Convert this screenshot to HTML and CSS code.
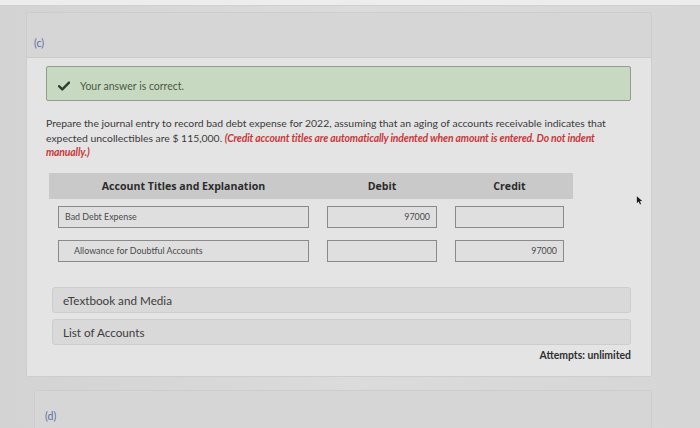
FILE: index.html
```html
<!DOCTYPE html>
<html lang="en">
<head>
<meta charset="utf-8">
<title>Journal entry</title>
<link rel="stylesheet" href="styles.css">
</head>
<body>
<div class="screen">
  <div class="topstrip"></div>
  <section class="card">
    <header class="card-head"><span class="part">(c)</span></header>
    <div class="card-body">
      <div class="notice">
        <svg class="check" viewBox="0 0 12 10" width="12" height="10"><path d="M1 5.2 L4.3 8.4 L11 1.6" fill="none" stroke="#2f3f2f" stroke-width="2.4" stroke-linecap="round" stroke-linejoin="round"/></svg>
        <span>Your answer is correct.</span>
      </div>
      <p class="prompt">Prepare the journal entry to record bad debt expense for 2022, assuming that an aging of accounts receivable indicates that expected uncollectibles are $ 115,000. <em class="note">(Credit account titles are automatically indented when amount is entered. Do not indent manually.)</em></p>
      <div class="journal">
        <div class="jhead">
          <div class="jh">Account Titles and Explanation</div>
          <div class="jh">Debit</div>
          <div class="jh">Credit</div>
        </div>
        <div class="jrow">
          <div class="cell"><div class="field acct">Bad Debt Expense</div></div>
          <div class="cell"><div class="field amt">97000</div></div>
          <div class="cell"><div class="field amt"></div></div>
        </div>
        <div class="jrow">
          <div class="cell"><div class="field acct credit">Allowance for Doubtful Accounts</div></div>
          <div class="cell"><div class="field amt"></div></div>
          <div class="cell"><div class="field amt">97000</div></div>
        </div>
      </div>
      <div class="resource">eTextbook and Media</div>
      <div class="resource second">List of Accounts</div>
      <div class="attempts">Attempts: unlimited</div>
    </div>
  </section>
  <section class="card next">
    <header class="card-head"><span class="part">(d)</span></header>
  </section>
  <svg class="cursor" viewBox="0 0 8 12" width="7" height="11"><path d="M1 1 L1 9 L3 7.2 L4.6 10.6 L5.8 10 L4.3 6.8 L7 6.6 Z" fill="#1a1a1a"/></svg>
</div>
</body>
</html>
```

FILE: styles.css
```css
html, body {
  margin: 0;
  padding: 0;
}
body {
  width: 700px;
  height: 428px;
  overflow: hidden;
  background: linear-gradient(90deg, #d3d3d3 0%, #dbdbdb 50%, #d6d6d6 100%);
  font-family: Lato, "Liberation Sans", sans-serif;
  color: #3b3b3b;
}
.screen {
  position: relative;
  height: 428px;
}
.topstrip {
  height: 5px;
  background: #ededed;
  border-bottom: 1px solid #d0d0d0;
}
.card {
  margin: 6px 48px 0 26px;
  border: 1px solid #cdcdcd;
  border-radius: 2px;
  background: #e4e4e4;
}
.card-head {
  height: 45px;
  box-sizing: border-box;
  padding: 23px 0 0 7px;
  background: #d6d6d6;
  border-bottom: 1px solid #cbcbcb;
  font-size: 10.5px;
  line-height: 14px;
}
.part {
  display: block;
  color: #5b6f9e;
}
.card-body {
  padding: 8px 20px 14px 19px;
}
.notice {
  height: 35px;
  box-sizing: border-box;
  display: flex;
  align-items: center;
  gap: 10px;
  padding: 4px 0 0 11px;
  background: #c8d9c1;
  border: 1px solid #8f9f8b;
  border-radius: 2px;
  font-size: 10.5px;
  color: #4b5a48;
}
.check {
  display: block;
}
.prompt {
  margin: 15px 0 0;
  width: 575px;
  font-size: 10.4px;
  line-height: 14.5px;
  color: #3a3a3a;
}
.note {
  font-weight: bold;
  color: #c8383a;
  letter-spacing: -0.15px;
}
.journal {
  margin-top: 13px;
  width: 524px;
  margin-left: 3px;
}
.jhead {
  display: grid;
  grid-template-columns: 269px 128px 127px;
  height: 26px;
  align-items: center;
  background: #c9c9c9;
}
.jh {
  text-align: center;
  font-family: "Open Sans", "DejaVu Sans", sans-serif;
  font-weight: bold;
  font-size: 10.6px;
  color: #2c2c2c;
}
.jrow {
  display: grid;
  grid-template-columns: 269px 128px 127px;
  padding-top: 7px;
}
.jrow + .jrow {
  padding-top: 12px;
}
.cell {
  padding: 0 9px;
}
.field {
  height: 22px;
  box-sizing: border-box;
  border: 1.5px solid #8a8a8a;
  background: #dfdfdf;
  font-size: 8.9px;
  line-height: 19px;
  color: #4a4a4a;
  white-space: nowrap;
}
.acct {
  padding-left: 6px;
}
.acct.credit {
  padding-left: 15px;
}
.amt {
  text-align: right;
  padding-right: 6px;
}
.resource {
  margin-top: 25px;
  margin-left: 6px;
  height: 26px;
  box-sizing: border-box;
  padding: 0 10px;
  background: #d9d9d9;
  border: 1px solid #cdcdcd;
  border-radius: 3px;
  font-size: 11.7px;
  line-height: 24px;
  color: #3d3d3d;
}
.resource.second {
  margin-top: 6px;
}
.attempts {
  margin-top: 4px;
  text-align: right;
  font-weight: bold;
  font-size: 10.4px;
  line-height: 13px;
  color: #2f2f2f;
}
.card.next {
  margin-top: 13px;
  margin-left: 34px;
  border-bottom: none;
}
.card.next .card-head {
  height: 40px;
  padding: 18px 0 0 10px;
  border-bottom: none;
}
.cursor {
  position: absolute;
  left: 636px;
  top: 195px;
}
```
